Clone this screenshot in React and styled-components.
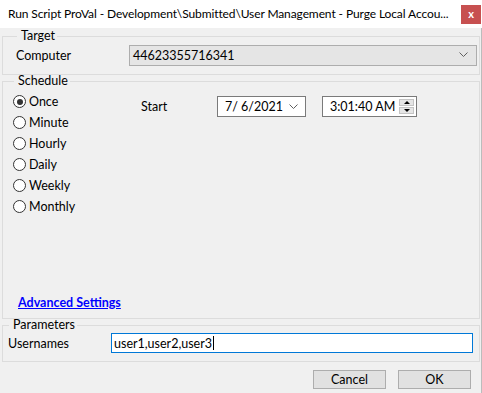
import * as React from 'react'
import styled, { createGlobalStyle } from 'styled-components'

const Global = createGlobalStyle`
  html, body { margin: 0; padding: 0; background: #f0f0f0; }
  body { font-family: Lato, "Noto Sans", "Liberation Sans", sans-serif; font-size: 12px; color: #000; }
`

const Window = styled.div`
  width: 482px;
  height: 393px;
  display: flex;
  flex-direction: column;
  background: #f0f0f0;
  overflow: hidden;
`

const TitleBar = styled.div`
  height: 28px;
  flex: none;
  background: #fff;
  display: flex;
  align-items: flex-start;
  padding-left: 8px;
  box-sizing: border-box;
`

const Title = styled.div`
  flex: 1;
  font-size: 12px;
  letter-spacing: -0.1px;
  line-height: 14px;
  margin-top: 7px;
  white-space: nowrap;
  overflow: hidden;
`

const CloseButton = styled.div`
  width: 20px;
  height: 19px;
  margin: 5px 1px 0 4px;
  background: #c75050;
  color: #fff;
  font-size: 11px;
  font-weight: bold;
  line-height: 18px;
  text-align: center;
`

const Body = styled.div`
  flex: 1;
  display: flex;
  flex-direction: column;
  border-right: 1px solid #bcbcbc;
  min-height: 0;
`

const Group = styled.fieldset`
  margin: ${p => p.$mt || 0}px 1px 0 2px;
  padding: ${p => p.$pad};
  border: 1px solid #dcdcdc;
  min-width: 0;
  display: flex;
  flex-direction: column;
  flex: ${p => (p.$grow ? 1 : 'none')};
`

const Legend = styled.legend`
  padding: 0 2px 0 4px;
  margin-left: 1px;
  font-size: 12.5px;
  line-height: 12px;
`

const FieldRow = styled.div`
  display: flex;
  align-items: ${p => p.$align || 'center'};
  height: ${p => p.$h}px;
`

const FieldLabel = styled.div`
  width: ${p => p.$w}px;
  flex: none;
  font-size: 12.5px;
  margin-bottom: ${p => p.$mb || 0}px;
`

const Combo = styled.div`
  flex: 1;
  height: 21px;
  box-sizing: border-box;
  border: 1px solid #adadad;
  background: #e5e5e5;
  display: flex;
  align-items: center;
  padding: 0 8px 0 3px;
  justify-content: space-between;
  font-size: 12.5px;
`

const Chevron = () => (
  <svg width="9" height="6" viewBox="0 0 9 6">
    <path d="M0.5 0.5 L4.5 4.5 L8.5 0.5" fill="none" stroke="#606060" strokeWidth="1" />
  </svg>
)

const ScheduleGrid = styled.div`
  display: flex;
  align-items: flex-start;
`

const RadioList = styled.div`
  display: flex;
  flex-direction: column;
  width: 128px;
  flex: none;
  margin-top: 4px;
`

const RadioRow = styled.label`
  display: flex;
  align-items: center;
  height: 21px;
  gap: 3px;
  font-size: 12.5px;
`

const RadioCircle = styled.span`
  width: 11px;
  height: 11px;
  border: 1px solid #333;
  border-radius: 50%;
  background: #fff;
  display: flex;
  align-items: center;
  justify-content: center;
  &::after {
    content: '';
    display: ${p => (p.$on ? 'block' : 'none')};
    width: 6px;
    height: 6px;
    border-radius: 50%;
    background: #333;
  }
`

const StartRow = styled.div`
  display: flex;
  align-items: center;
  margin-top: 9px;
`

const Picker = styled.div`
  width: ${p => p.$w}px;
  height: 21px;
  box-sizing: border-box;
  border: 1px solid #7a7a7a;
  background: #fff;
  display: flex;
  align-items: center;
  justify-content: space-between;
  padding: 0 2px 0 7px;
  margin-right: 16px;
  font-size: 12.5px;
`

const PickerArrow = styled.span`
  display: flex;
  margin-right: 5px;
`

const Spin = styled.div`
  width: 15px;
  height: 15px;
  display: flex;
  flex-direction: column;
  gap: 1px;
`

const SpinHalf = styled.div`
  flex: 1;
  background: #e5e5e5;
  border: 1px solid #c4c4c4;
  display: flex;
  align-items: center;
  justify-content: center;
  &::after {
    content: '';
    border-left: 3px solid transparent;
    border-right: 3px solid transparent;
    ${p => (p.$up ? 'border-bottom: 3px solid #000;' : 'border-top: 3px solid #000;')}
  }
`

const Spacer = styled.div`
  flex: 1;
`

const Link = styled.a`
  color: #0000ff;
  font-weight: bold;
  font-size: 12.5px;
  text-decoration: underline;
  margin-left: 5px;
  line-height: 14px;
`

const TextInput = styled.div`
  flex: 1;
  height: 20px;
  box-sizing: border-box;
  border: 1px solid #0078d7;
  background: #fff;
  display: flex;
  align-items: center;
  padding-left: 2px;
  margin-right: 4px;
  font-size: 12.5px;
`

const Caret = styled.span`
  display: inline-block;
  width: 1px;
  height: 14px;
  background: #000;
  margin-left: 1px;
`

const ButtonBar = styled.div`
  display: flex;
  justify-content: flex-end;
  gap: 12px;
  padding: 8px 10px 4px 0;
`

const Button = styled.div`
  width: 73px;
  height: 19px;
  box-sizing: border-box;
  border: 1px solid #adadad;
  background: #e1e1e1;
  display: flex;
  align-items: center;
  justify-content: center;
  font-size: 12.5px;
`

const schedules = ['Once', 'Minute', 'Hourly', 'Daily', 'Weekly', 'Monthly']

export default function App() {
  return (
    <>
      <Global />
      <Window>
        <TitleBar>
          <Title>Run Script ProVal - Development\Submitted\User Management - Purge Local Accou...</Title>
          <CloseButton>x</CloseButton>
        </TitleBar>
        <Body>
          <Group $mt={2} $pad="0 2px 6px 13px">
            <Legend>Target</Legend>
            <FieldRow $h={26}>
              <FieldLabel $w={113}>Computer</FieldLabel>
              <Combo>
                <span>44623355716341</span>
                <Chevron />
              </Combo>
            </FieldRow>
          </Group>
          <Group $grow $pad="0 2px 8px 10px">
            <Legend>Schedule</Legend>
            <ScheduleGrid>
              <RadioList>
                {schedules.map((s, i) => (
                  <RadioRow key={s}>
                    <RadioCircle $on={i === 0} />
                    {s}
                  </RadioRow>
                ))}
              </RadioList>
              <StartRow>
                <FieldLabel $w={76}>Start</FieldLabel>
                <Picker $w={89}>
                  <span>7/ 6/2021</span>
                  <PickerArrow>
                    <Chevron />
                  </PickerArrow>
                </Picker>
                <Picker $w={95}>
                  <span>3:01:40 AM</span>
                  <Spin>
                    <SpinHalf $up />
                    <SpinHalf />
                  </Spin>
                </Picker>
              </StartRow>
            </ScheduleGrid>
            <Spacer />
            <Link>Advanced Settings</Link>
          </Group>
          <Group $pad="0 2px 8px 5px">
            <Legend>Parameters</Legend>
            <FieldRow $h={22} $align="flex-end">
              <FieldLabel $w={103} $mb={2}>Usernames</FieldLabel>
              <TextInput>
                user1,user2,user3
                <Caret />
              </TextInput>
            </FieldRow>
          </Group>
          <ButtonBar>
            <Button>Cancel</Button>
            <Button>OK</Button>
          </ButtonBar>
        </Body>
      </Window>
    </>
  )
}
